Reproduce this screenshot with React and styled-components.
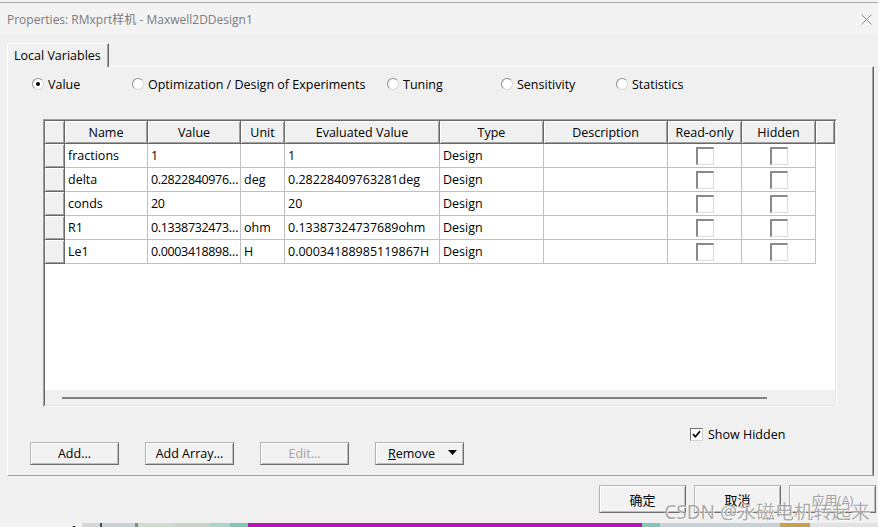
import React from "react";
import styled, { createGlobalStyle } from "styled-components";

const GlobalStyle = createGlobalStyle`
	*, *::before, *::after {
		box-sizing: border-box;
	}
	html, body {
		margin: 0;
		padding: 0;
		background: #f0f0f0;
	}
	body {
		font-family: "Open Sans", "Noto Sans CJK SC", sans-serif;
		font-size: 12.5px;
		color: #000;
	}
`;

const COLS = "20px 83px 93px 44px 155px 104px 124px 74px 74px 1fr";

const rows = [
	["fractions", "1", "", "1", "Design"],
	["delta", "0.2822840976…", "deg", "0.28228409763281deg", "Design"],
	["conds", "20", "", "20", "Design"],
	["R1", "0.1338732473…", "ohm", "0.13387324737689ohm", "Design"],
	["Le1", "0.0003418898…", "H", "0.00034188985119867H", "Design"],
];

const headers = [
	"",
	"Name",
	"Value",
	"Unit",
	"Evaluated Value",
	"Type",
	"Description",
	"Read-only",
	"Hidden",
	"",
];

const radios = [
	{ label: "Value", width: 100, on: true },
	{ label: "Optimization / Design of Experiments", width: 255 },
	{ label: "Tuning", width: 114 },
	{ label: "Sensitivity", width: 115 },
	{ label: "Statistics" },
];

// bits of the desktop showing under the dialog
const strip = [
	{ w: 82, c: "#f4f4f4", text: "createUserDef" },
	{ w: 18, c: "#d6d6d6" },
	{ w: 2, c: "#4a4a4a" },
	{ w: 33, c: "#c9d1d6" },
	{ w: 3, c: "#8a8a8a" },
	{ w: 37, c: "#d2dad2" },
	{ w: 35, c: "#c6d3cb" },
	{ w: 20, c: "#a9d6c6" },
	{ w: 18, c: "#7ec6b6" },
	{ w: 394, c: "#b518b6" },
	{ w: 18, c: "#7ec6b6" },
	{ w: 120, c: "#c8d0d8" },
	{ w: 30, c: "#c9a052" },
	{ w: 68, c: "#e2e2e2" },
];

const App = () => {
	return (
		<>
			<GlobalStyle />
			<Window>
				<TopStrip />
				<TitleBar>
					<Title>Properties: RMxprt样机 - Maxwell2DDesign1</Title>
					<svg width="11" height="11" viewBox="0 0 11 11">
						<path d="M0.5 0.5 L10.5 10.5 M10.5 0.5 L0.5 10.5" stroke="#8a8a8a" strokeWidth="1" />
					</svg>
				</TitleBar>

				<Body>
					<TabStrip>
						<Tab>Local Variables</Tab>
					</TabStrip>
					<Panel>
						<RadioRow>
							{radios.map((r) => (
								<RadioItem key={r.label} $width={r.width}>
									<Radio>{r.on && <Dot />}</Radio>
									<span>{r.label}</span>
								</RadioItem>
							))}
						</RadioRow>

						<GridOuter>
							<GridInner>
								<Row $height={23}>
									{headers.map((h, i) => (
										<HeaderCell key={i}>{h}</HeaderCell>
									))}
								</Row>
								{rows.map((r) => (
									<Row key={r[0]} $height={24}>
										<HeaderCell />
										{r.map((v, i) => (
											<Cell key={i} $tight={i === 1}>
												{v}
											</Cell>
										))}
										<Cell />
										<CheckCell>
											<GridCheck />
										</CheckCell>
										<CheckCell>
											<GridCheck />
										</CheckCell>
										<Cell $last />
									</Row>
								))}
								<Empty />
								<ScrollTrack>
									<ScrollThumb />
								</ScrollTrack>
							</GridInner>
						</GridOuter>

						<ShowHiddenRow>
							<SmallCheck>
								<svg width="9" height="9" viewBox="0 0 9 9">
									<path d="M1 4.2 L3.4 6.8 L8 1.2" stroke="#000" strokeWidth="1.7" fill="none" />
								</svg>
							</SmallCheck>
							<span>Show Hidden</span>
						</ShowHiddenRow>

						<ButtonRow>
							<Button>Add...</Button>
							<Button>Add Array...</Button>
							<Button $disabled>Edit...</Button>
							<MenuButton>
								<span>
									<u>R</u>emove
								</span>
								<svg width="9" height="5" viewBox="0 0 9 5">
									<polygon points="0,0 9,0 4.5,5" fill="#000" />
								</svg>
							</MenuButton>
						</ButtonRow>
					</Panel>
				</Body>

				<Footer>
					<DialogButton>确定</DialogButton>
					<DialogButton>取消</DialogButton>
					<DialogButton $disabled>应用(A)</DialogButton>
				</Footer>

				<BottomStrip>
					{strip.map((s, i) => (
						<StripPart key={i} $w={s.w} $c={s.c}>
							{s.text}
						</StripPart>
					))}
				</BottomStrip>

				<Watermark>CSDN @永磁电机转起来</Watermark>
			</Window>
		</>
	);
};

export default App;

const Window = styled.div`
	position: relative;
	width: 878px;
	height: 527px;
	display: flex;
	flex-direction: column;
	overflow: hidden;
	background: #f0f0f0;
`;

const TopStrip = styled.div`
	height: 3px;
	flex-shrink: 0;
	background: #f4f4f4;
	border-bottom: 1px solid #a9a9a9;
`;

const TitleBar = styled.div`
	height: 32px;
	flex-shrink: 0;
	display: flex;
	align-items: center;
	justify-content: space-between;
	padding: 0 6px 0 7px;
	background: #f3f3f3;
`;

const Title = styled.div`
	color: #7a7a7a;
	font-size: 12px;
`;

const Body = styled.div`
	display: flex;
	flex-direction: column;
	flex-shrink: 0;
	padding: 8px 4px 0 7px;
`;

const TabStrip = styled.div`
	display: flex;
	height: 23px;
`;

const Tab = styled.div`
	position: relative;
	z-index: 1;
	height: 24px;
	display: flex;
	align-items: center;
	padding: 0 7px 1px 6px;
	background: #f0f0f0;
	border-top: 1px solid #fff;
	border-left: 1px solid #fff;
	border-right: 1px solid #696969;
	box-shadow: inset -1px 0 #a0a0a0;
`;

const Panel = styled.div`
	height: 410px;
	display: flex;
	flex-direction: column;
	border-top: 1px solid #fff;
	border-left: 1px solid #fff;
	border-right: 1px solid #696969;
	border-bottom: 1px solid #a0a0a0;
	box-shadow: inset -1px 0 #a0a0a0;
`;

const RadioRow = styled.div`
	height: 34px;
	display: flex;
	align-items: center;
	padding-left: 24px;
`;

const RadioItem = styled.div`
	display: flex;
	align-items: center;
	gap: 4px;
	width: ${(p) => (p.$width ? `${p.$width}px` : "auto")};
`;

const Radio = styled.div`
	width: 12px;
	height: 12px;
	border-radius: 50%;
	border: 1px solid #8c8c8c;
	border-right-color: #d8d8d8;
	border-bottom-color: #d8d8d8;
	background: #fff;
	display: flex;
	align-items: center;
	justify-content: center;
`;

const Dot = styled.div`
	width: 4px;
	height: 4px;
	border-radius: 50%;
	background: #000;
`;

const GridOuter = styled.div`
	margin: 18px 0 0 35px;
	width: 794px;
	height: 288px;
	flex-shrink: 0;
	border-top: 1px solid #a0a0a0;
	border-left: 1px solid #a0a0a0;
	border-right: 1px solid #fff;
	border-bottom: 1px solid #fff;
`;

const GridInner = styled.div`
	height: 100%;
	display: flex;
	flex-direction: column;
	border-top: 1px solid #696969;
	border-left: 1px solid #696969;
	border-right: 1px solid #e3e3e3;
	border-bottom: 1px solid #e3e3e3;
`;

const Row = styled.div`
	display: grid;
	grid-template-columns: ${COLS};
	height: ${(p) => p.$height}px;
	flex-shrink: 0;
`;

const HeaderCell = styled.div`
	display: flex;
	align-items: center;
	justify-content: center;
	background: #f0f0f0;
	border-right: 1px solid #696969;
	border-bottom: 1px solid #696969;
	box-shadow: inset 1px 1px #fff, inset -1px -1px #a0a0a0;
	white-space: nowrap;
	overflow: hidden;
`;

const Cell = styled.div`
	display: flex;
	align-items: center;
	padding-left: 3px;
	background: #fff;
	border-right: ${(p) => (p.$last ? "none" : "1px solid #c0c0c0")};
	border-bottom: ${(p) => (p.$last ? "none" : "1px solid #c0c0c0")};
	letter-spacing: ${(p) => (p.$tight ? "-0.35px" : "0")};
	white-space: nowrap;
	overflow: hidden;
`;

const CheckCell = styled(Cell)`
	justify-content: center;
	padding-left: 0;
`;

const GridCheck = styled.div`
	width: 18px;
	height: 18px;
	background: #fff;
	border-top: 2px solid #8a8a8a;
	border-left: 2px solid #8a8a8a;
	border-right: 1px solid #dcdcdc;
	border-bottom: 1px solid #dcdcdc;
`;

const Empty = styled.div`
	flex: 1;
	background: #fff;
`;

const ScrollTrack = styled.div`
	height: 15px;
	flex-shrink: 0;
	display: flex;
	align-items: center;
	background: #f0f0f0;
`;

const ScrollThumb = styled.div`
	margin-left: 17px;
	width: 705px;
	height: 2px;
	background: #828282;
`;

const ShowHiddenRow = styled.div`
	margin-top: 20px;
	height: 14px;
	display: flex;
	align-items: center;
	gap: 5px;
	padding-left: 682px;
`;

const SmallCheck = styled.div`
	width: 13px;
	height: 13px;
	display: flex;
	align-items: center;
	justify-content: center;
	background: #fff;
	border-top: 1px solid #6e6e6e;
	border-left: 1px solid #6e6e6e;
	border-right: 1px solid #d4d4d4;
	border-bottom: 1px solid #d4d4d4;
`;

const ButtonRow = styled.div`
	margin-top: 1px;
	display: flex;
	gap: 26px;
	padding-left: 22px;
`;

const Button = styled.div`
	width: 89px;
	height: 23px;
	flex-shrink: 0;
	display: flex;
	align-items: center;
	justify-content: center;
	background: #f2f2f2;
	border: 1px solid;
	border-color: #b4b4b4 #6e6e6e #6e6e6e #b4b4b4;
	box-shadow: inset 1px 1px #fff, inset -1px -1px #bdbdbd;
	color: ${(p) => (p.$disabled ? "#a3a3a3" : "#000")};
`;

const MenuButton = styled(Button)`
	justify-content: space-between;
	padding: 0 6px 0 12px;

	svg {
		margin-bottom: 3px;
	}
`;

const Footer = styled.div`
	height: 47px;
	flex-shrink: 0;
	display: flex;
	justify-content: flex-end;
	align-items: flex-start;
	gap: 8px;
	padding: 9px 2px 0 0;
`;

const DialogButton = styled(Button)`
	width: 87px;
	height: 28px;
	font-size: 13px;
`;

const BottomStrip = styled.div`
	height: 4px;
	flex-shrink: 0;
	display: flex;
	overflow: hidden;
`;

const StripPart = styled.div`
	width: ${(p) => p.$w}px;
	flex-shrink: 0;
	background: ${(p) => p.$c};
	font-size: 12px;
	line-height: 18px;
	white-space: nowrap;
	overflow: hidden;
	text-indent: -6px;
`;

const Watermark = styled.div`
	position: absolute;
	right: 8px;
	bottom: 4px;
	font-family: "Noto Sans", "Noto Sans CJK SC", sans-serif;
	font-size: 19px;
	line-height: 22px;
	color: rgba(140, 140, 140, 0.75);
	text-shadow: 0 0 1px #fff, 1px 1px 0 rgba(255, 255, 255, 0.8);
	pointer-events: none;
	white-space: nowrap;
`;
